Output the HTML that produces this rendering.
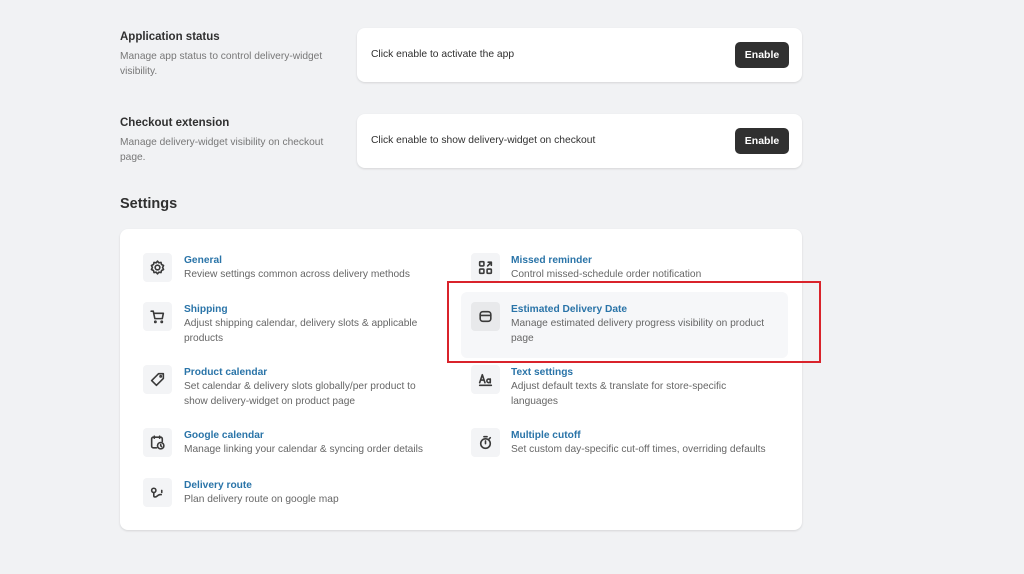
<!DOCTYPE html>
<html><head><meta charset="utf-8"><style>
*{margin:0;padding:0;box-sizing:border-box}
body{width:1024px;height:574px;background:#f1f2f4;font-family:"Liberation Sans",sans-serif;position:relative;overflow:hidden;color:#303030}
.a{position:absolute}
.h{font-size:11.5px;font-weight:bold;color:#303030}
.d{font-size:10.2px;color:#777;line-height:15px}
.card{background:#fff;border-radius:8px;box-shadow:0 1px 2px rgba(0,0,0,.12)}
.btn{background:#303030;color:#fff;font-size:10.5px;font-weight:bold;border-radius:5px;width:54px;height:26px;display:flex;align-items:center;justify-content:center}
.ib{width:29px;height:29px;background:#f3f4f6;border-radius:4px;display:flex;align-items:center;justify-content:center}
.t{font-size:10.2px;font-weight:bold;color:#2a74a8;line-height:14px}
.s{font-size:10.2px;color:#666;line-height:14.5px}
svg{width:17px;height:17px;fill:none;stroke:#3a3a3a;stroke-width:1.5;stroke-linecap:round;stroke-linejoin:round}
</style></head><body>
<div class="a h" style="left:120px;top:31px">Application status</div>
<div class="a d" style="left:120px;top:49px;width:215px">Manage app status to control delivery-widget visibility.</div>
<div class="a card" style="left:357px;top:28px;width:445px;height:54px"></div>
<div class="a" style="left:371px;top:49px;font-size:10.3px">Click enable to activate the app</div>
<div class="a btn" style="left:735px;top:42px">Enable</div>

<div class="a h" style="left:120px;top:117px">Checkout extension</div>
<div class="a d" style="left:120px;top:135px;width:215px">Manage delivery-widget visibility on checkout page.</div>
<div class="a card" style="left:357px;top:114px;width:445px;height:54px"></div>
<div class="a" style="left:371px;top:135px;font-size:10.3px">Click enable to show delivery-widget on checkout</div>
<div class="a btn" style="left:735px;top:128px">Enable</div>

<div class="a" style="left:120px;top:196px;font-size:14.5px;font-weight:bold;color:#303030">Settings</div>
<div class="a card" style="left:120px;top:229px;width:682px;height:301px"></div>
<div class="a" style="left:461px;top:292px;width:327px;height:66px;background:#f6f7f9;border-radius:6px"></div>

<div class="a ib" style="left:143px;top:253px"><svg viewBox="0 0 16 16"><circle cx="8" cy="8" r="2.2"/><path d="M8 2l1.3 1.6 2-.4.5 2 1.9.9-.9 1.9.9 1.9-1.9.9-.5 2-2-.4L8 14l-1.3-1.6-2 .4-.5-2-1.9-.9.9-1.9-.9-1.9 1.9-.9.5-2 2 .4z"/></svg></div>
<div class="a t" style="left:184px;top:254px">General</div>
<div class="a s" style="left:184px;top:268px">Review settings common across delivery methods</div>

<div class="a ib" style="left:143px;top:302px"><svg viewBox="0 0 16 16"><path d="M2 3h2l1.5 7h7l1-5H5"/><circle cx="6" cy="13" r=".6"/><circle cx="12" cy="13" r=".6"/></svg></div>
<div class="a t" style="left:184px;top:303px">Shipping</div>
<div class="a s" style="left:184px;top:317px;width:250px">Adjust shipping calendar, delivery slots &amp; applicable products</div>

<div class="a ib" style="left:143px;top:365px"><svg viewBox="0 0 16 16"><path d="M9 2.5h4.5V7L7 13.5 2.5 9z"/><circle cx="11" cy="5" r=".6"/></svg></div>
<div class="a t" style="left:184px;top:366px">Product calendar</div>
<div class="a s" style="left:184px;top:380px;width:245px">Set calendar &amp; delivery slots globally/per product to show delivery-widget on product page</div>

<div class="a ib" style="left:143px;top:428px"><svg viewBox="0 0 16 16"><path d="M7 13H4a1.5 1.5 0 0 1-1.5-1.5v-7A1.5 1.5 0 0 1 4 3h7a1.5 1.5 0 0 1 1.5 1.5V7M5 2v2M10 2v2"/><circle cx="11" cy="11" r="3"/><path d="M11 9.8V11l.8.8"/></svg></div>
<div class="a t" style="left:184px;top:429px">Google calendar</div>
<div class="a s" style="left:184px;top:443px">Manage linking your calendar &amp; syncing order details</div>

<div class="a ib" style="left:143px;top:478px"><svg viewBox="0 0 16 16"><circle cx="4.5" cy="6" r="2"/><path d="M4.5 8v3c0 1.5 2 1.5 3 .5s2-2 4-1.5M12 6v2"/></svg></div>
<div class="a t" style="left:184px;top:479px">Delivery route</div>
<div class="a s" style="left:184px;top:493px">Plan delivery route on google map</div>

<div class="a ib" style="left:471px;top:253px"><svg viewBox="0 0 16 16"><rect x="2.5" y="2.5" width="4" height="4" rx=".8"/><rect x="2.5" y="9.5" width="4" height="4" rx=".8"/><rect x="9.5" y="9.5" width="4" height="4" rx=".8"/><path d="M10 6.5l3.5-3.5M10.5 3h3v3"/></svg></div>
<div class="a t" style="left:511px;top:254px">Missed reminder</div>
<div class="a s" style="left:511px;top:268px">Control missed-schedule order notification</div>

<div class="a ib" style="left:471px;top:302px;background:#e8e9eb"><svg viewBox="0 0 16 16"><rect x="3" y="3.5" width="10" height="9" rx="2.5"/><path d="M3 7h10"/></svg></div>
<div class="a t" style="left:511px;top:303px">Estimated Delivery Date</div>
<div class="a s" style="left:511px;top:317px;width:265px">Manage estimated delivery progress visibility on product page</div>

<div class="a ib" style="left:471px;top:365px"><svg viewBox="0 0 16 16"><path d="M2.5 11L5 3.5 7.5 11M3.3 8.5h3.4M12.5 7.5v3.5M12.5 8.5a1.7 1.7 0 1 0 0 1.5M2.5 13.5h11"/></svg></div>
<div class="a t" style="left:511px;top:366px">Text settings</div>
<div class="a s" style="left:511px;top:380px;width:240px">Adjust default texts &amp; translate for store-specific languages</div>

<div class="a ib" style="left:471px;top:428px"><svg viewBox="0 0 16 16"><circle cx="8" cy="9" r="4.5"/><path d="M6.5 2.5h3M8 9V6.5M11.5 4.5l1 -1"/></svg></div>
<div class="a t" style="left:511px;top:429px">Multiple cutoff</div>
<div class="a s" style="left:511px;top:443px">Set custom day-specific cut-off times, overriding defaults</div>

<div class="a" style="left:447px;top:281px;width:374px;height:82px;border:2px solid #d9232b"></div>
</body></html>
